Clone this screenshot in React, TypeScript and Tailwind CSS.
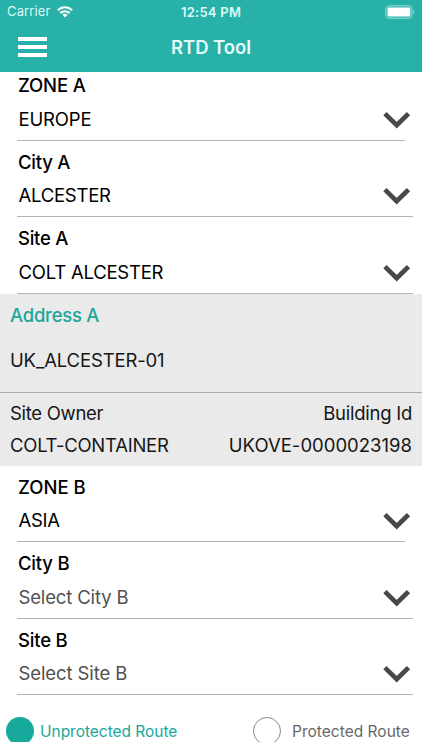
import { FC } from 'react';
import clsx from 'clsx';

interface SelectFieldProps {
    label: string;
    value: string;
    labelClass: string;
    valueClass: string;
    placeholder?: boolean;
    short?: boolean;
}

const ChevronIcon = () => (
    <svg width="28" height="18" viewBox="0 0 28 18" fill="none">
        <path d="M1.9 2.6L13.7 14.2L25.5 2.6" stroke="#484848" strokeWidth="4.7" />
    </svg>
);

const StatusBar = () => (
    <div className="flex h-6 items-center text-[13px] text-[#dcfaf6]">
        <div className="flex flex-1 items-center pl-[7px]">
            <span className="w-[50px] whitespace-nowrap tracking-[0.14px]">Carrier</span>
            <svg width="16" height="12" viewBox="0 0 16 12" fill="none" stroke="#ffffff" strokeWidth="2.2">
                <path d="M0.8 4.3C4.8 0.2 11.2 0.2 15.2 4.3" />
                <path d="M3.3 7.1C5.9 4.6 10.1 4.6 12.7 7.1" />
                <path d="M8 11.4L5.4 8.8C6.8 7.5 9.2 7.5 10.6 8.8Z" fill="#ffffff" stroke="none" />
            </svg>
        </div>
        <span className="pt-px font-semibold tracking-[0.25px]">12:54 PM</span>
        <div className="flex flex-1 justify-end pr-[7px]">
            <svg width="30" height="14" viewBox="0 0 30 14" fill="none">
                <rect x="0.9" y="0.9" width="26" height="12.2" rx="3" stroke="#a5dfda" />
                <rect x="2.5" y="2.5" width="22.8" height="9" rx="1.4" fill="#ffffff" />
                <path d="M28.3 5V9C29.7 8.4 29.7 5.6 28.3 5Z" fill="#a5dfda" />
            </svg>
        </div>
    </div>
);

const NavBar = () => (
    <div className="grid h-12 grid-cols-3 items-center">
        <button className="mb-0.5 ml-[18px] flex w-[29px] flex-col gap-1" aria-label="Menu">
            <span className="h-1 w-full bg-white" />
            <span className="h-1 w-full bg-white" />
            <span className="h-1 w-full bg-white" />
        </button>
        <h1 className="text-center text-[18.5px] font-semibold tracking-[-0.05px] text-[#e4fdfa]">RTD Tool</h1>
    </div>
);

const SelectField: FC<SelectFieldProps> = ({ label, value, labelClass, valueClass, placeholder, short }) => (
    <div
        className={clsx(
            'ml-[17px] flex h-[76.5px] flex-col border-b border-[#b4b4b4] pt-2',
            short ? 'mr-[17px]' : 'mr-[9px]'
        )}
    >
        <span className={clsx('h-[26px] whitespace-nowrap pl-px font-medium leading-[26px]', labelClass)}>{label}</span>
        <div className="mt-[9.5px] flex h-6 items-center justify-between">
            <span className={clsx('whitespace-nowrap pl-[1.5px]', valueClass, placeholder && 'text-[#505050]')}>
                {value}
            </span>
            <span className={clsx('shrink-0', short ? '-mr-[6px]' : 'mr-[2px]')}>
                <ChevronIcon />
            </span>
        </div>
    </div>
);

const AddressPanel = () => (
    <section className="h-[172px] bg-[#eaeaea] text-[#161616]">
        <div className="flex h-[99px] flex-col border-b border-[#aaaaaa] pl-[10px] pt-2">
            <h2 className="h-[26px] font-medium leading-[26px] tracking-[-0.25px] text-[#20a69b]">Address A</h2>
            <p className="mt-[19px] h-[26px] leading-[26px] tracking-[-0.15px]">UK_ALCESTER-01</p>
        </div>
        <div className="flex justify-between px-[10px] pt-[7px] leading-[26px]">
            <div>
                <p className="tracking-[-0.3px]">Site Owner</p>
                <p className="mt-[6px] tracking-[-0.25px]">COLT-CONTAINER</p>
            </div>
            <div className="text-right">
                <p className="tracking-[-0.25px]">Building Id</p>
                <p className="mt-[6px] tracking-[0.01px]">UKOVE-0000023198</p>
            </div>
        </div>
    </section>
);

const RouteOptions = () => (
    <div className="mt-[22px] flex h-[24.5px] overflow-hidden text-[15.5px] leading-[30px]">
        <label className="flex w-[253px] pl-[6px]">
            <span className="mr-[6px] h-7 w-7 shrink-0 rounded-full bg-[#17a99b]" />
            <span className="whitespace-nowrap tracking-[-0.03px] text-[#20a69b]">Unprotected Route</span>
        </label>
        <label className="flex">
            <span className="mr-[11px] h-7 w-7 shrink-0 rounded-full border border-[#888888]" />
            <span className="whitespace-nowrap tracking-[0.02px] text-[#686868]">Protected Route</span>
        </label>
    </div>
);

const App = () => {
    return (
        <div className="flex h-[750px] w-[422px] flex-col overflow-hidden bg-white font-['Inter',sans-serif] text-[18.5px] text-black">
            <header className="h-[72px] shrink-0 bg-[#27b1a9]">
                <StatusBar />
                <NavBar />
            </header>
            <main className="flex-1 overflow-hidden">
                <div className="-mt-2">
                    <SelectField label="ZONE A" value="EUROPE" labelClass="tracking-[-0.15px]" valueClass="tracking-[-0.15px]" short />
                    <SelectField label="City A" value="ALCESTER" labelClass="tracking-[-0.25px]" valueClass="tracking-[-0.25px]" />
                    <SelectField label="Site A" value="COLT ALCESTER" labelClass="tracking-[-0.25px]" valueClass="tracking-[-0.22px]" />
                </div>
                <AddressPanel />
                <SelectField label="ZONE B" value="ASIA" labelClass="tracking-[0px]" valueClass="tracking-[-0.3px]" short />
                <SelectField label="City B" value="Select City B" labelClass="tracking-[-0.2px]" valueClass="tracking-[-0.15px]" placeholder />
                <SelectField label="Site B" value="Select Site B" labelClass="tracking-[-0.2px]" valueClass="tracking-[-0.1px]" placeholder />
                <RouteOptions />
            </main>
        </div>
    );
};

export default App;
